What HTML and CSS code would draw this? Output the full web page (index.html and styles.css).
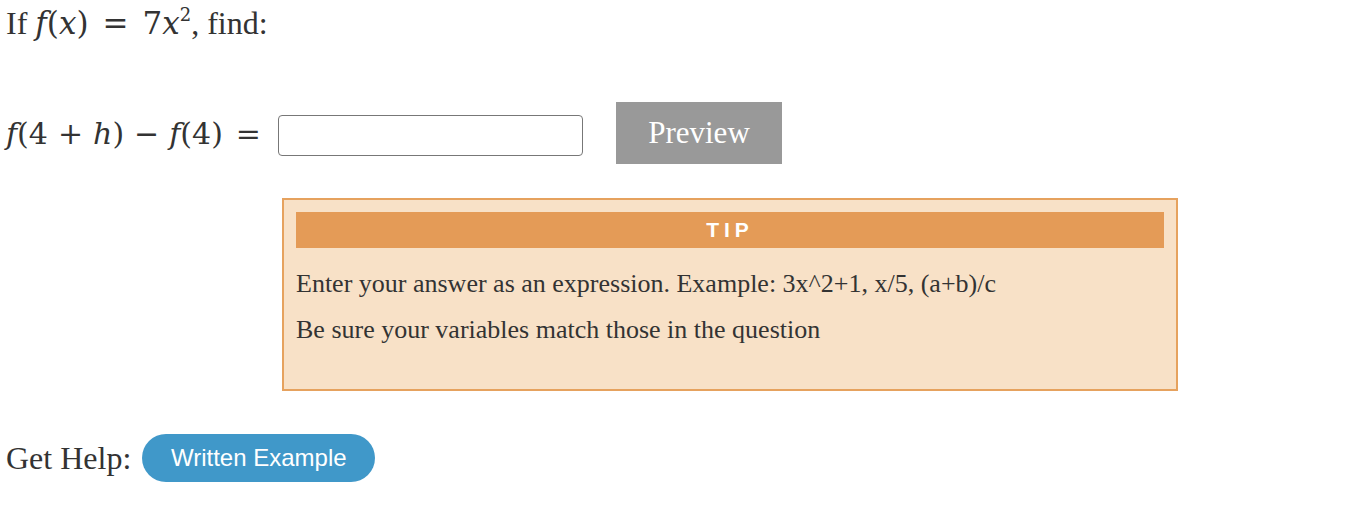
FILE: index.html
```html
<!DOCTYPE html>
<html>
<head>
<meta charset="utf-8">
<link rel="stylesheet" href="styles.css">
</head>
<body>
<div class="page">
  <div class="question">If <span class="math q"><i>f</i>(<i>x</i>)<span class="op">=</span>7<i>x</i><sup>2</sup></span>, find:</div>
  <div class="answer-row">
    <span class="math"><i>f</i>(4<span class="bin">+</span><i>h</i>)<span class="bin">−</span><i>f</i>(4)<span class="op">=</span></span>
    <input class="answer" type="text">
    <button class="preview">Preview</button>
  </div>
  <div class="tip">
    <div class="tip-head">TIP</div>
    <p>Enter your answer as an expression. Example: 3x^2+1, x/5, (a+b)/c</p>
    <p>Be sure your variables match those in the question</p>
  </div>
  <div class="help-row">
    <span class="help-label">Get Help:</span>
    <button class="help-btn">Written Example</button>
  </div>
</div>
</body>
</html>
```
FILE: styles.css
```css
html, body { margin: 0; padding: 0; background: #fff; }
.page {
  padding: 0 0 0 6px;
  font-family: "Liberation Serif", "Times New Roman", serif;
  color: #333;
  font-size: 29px;
}
.question {
  height: 46px;
  line-height: 46px;
  font-size: 32px;
}
.math { font-family: "DejaVu Serif", serif; font-size: 30px; }
.math.q { font-size: 31px; }
.math.q .op { margin: 0 14px; }
.math i { font-style: italic; }
.math sup { font-size: 18px; line-height: 0; vertical-align: 13px; }
.op { margin: 0 13px; }
.bin { margin: 0 10px; }
.answer-row {
  display: flex;
  align-items: center;
  margin-top: 56px;
  height: 62px;
}
.answer {
  margin-left: 4px;
  border: 1.5px solid #777;
  border-radius: 4px;
  box-sizing: border-box;
  height: 41px;
  width: 305px;
  padding: 0;
  position: relative;
  top: 2px;
}
.preview {
  margin-left: 33px;
  width: 166px;
  height: 62px;
  background: #999;
  color: #fff;
  border: none;
  font-family: "Liberation Serif", serif;
  font-size: 31px;
  padding: 0;
}
.tip {
  margin: 34px 0 0 276px;
  width: 896px;
  height: 193px;
  box-sizing: border-box;
  border: 2px solid #e6a25e;
  background: #f8e1c7;
  padding: 12px;
}
.tip-head {
  background: #e49b57;
  color: #fff;
  height: 36px;
  line-height: 36px;
  text-align: center;
  font-family: "Liberation Sans", Arial, sans-serif;
  font-weight: bold;
  font-size: 21px;
  letter-spacing: 5px;
}
.tip p {
  margin: 0;
  font-size: 26px;
  line-height: 46px;
}
.tip p:first-of-type { margin-top: 13px; }
.help-row {
  display: flex;
  align-items: center;
  margin-top: 43px;
  height: 48px;
}
.help-label { font-size: 32px; }
.help-btn {
  margin-left: 11px;
  width: 233px;
  height: 48px;
  border-radius: 24px;
  border: none;
  background: #4098c9;
  color: #fff;
  font-family: "Liberation Sans", Arial, sans-serif;
  font-size: 24px;
  padding: 0;
}
```
